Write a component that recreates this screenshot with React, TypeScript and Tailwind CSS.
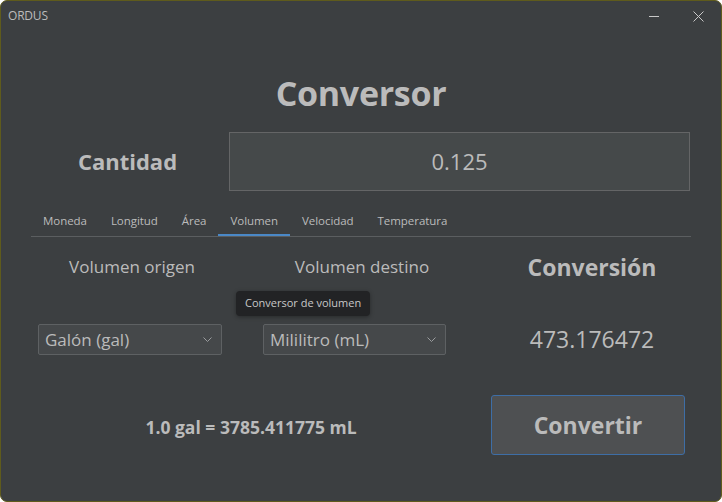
import React from 'react';

const tabs = ['Moneda', 'Longitud', 'Área', 'Volumen', 'Velocidad', 'Temperatura'];

const Chevron = () => (
  <svg width="9" height="5" viewBox="0 0 9 5" fill="none" stroke="#9a9c9e" strokeWidth="1">
    <path d="M0.5 0.5 L4.5 4.5 L8.5 0.5" />
  </svg>
);

const Combo = ({ label, width }: { label: string; width: string }) => (
  <div className={`${width} h-[31px] flex items-center justify-between pl-[6px] pr-[9px] bg-[#45484a] border border-[#5e6163] rounded-[2px]`}>
    <span className="text-[17px] text-[#bbbbbb]">{label}</span>
    <Chevron />
  </div>
);

export default function App() {
  return (
    <div
      className="w-[722px] h-[502px] bg-[#3c3f41] border border-[#5f5b1c] rounded-[7px] overflow-hidden text-[#bbbbbb] flex flex-col"
      style={{ fontFamily: '"Open Sans", "Noto Sans", sans-serif' }}
    >
      {/* title bar */}
      <div className="h-[30px] flex items-center justify-between pl-[7px] pr-[17px]">
        <span className="text-[12px] tracking-[-0.2px]">ORDUS</span>
        <div className="flex items-center gap-[33px]">
          <svg width="11" height="11" viewBox="0 0 11 11" stroke="#c8c8c8" strokeWidth="1">
            <path d="M0 5.5 H10" />
          </svg>
          <svg width="11" height="11" viewBox="0 0 11 11" stroke="#c8c8c8" strokeWidth="1">
            <path d="M0.5 0.5 L10.5 10.5 M10.5 0.5 L0.5 10.5" />
          </svg>
        </div>
      </div>

      <h1 className="mt-[42px] text-center text-[34px] font-bold leading-[40px] tracking-[-0.3px]">Conversor</h1>

      {/* cantidad */}
      <div className="mt-[19px] flex items-center pl-[31px] pr-[31px]">
        <div className="w-[197px] pr-[6px] text-center text-[22px] font-bold">Cantidad</div>
        <div className="flex-1 h-[59px] bg-[#45494a] border border-[#646566] flex items-center justify-center text-[22px]">
          0.125
        </div>
      </div>

      {/* tabs */}
      <div className="mt-[17px] mx-[30px] flex border-b border-[#5b5e60] text-[11.5px] tracking-[-0.05px]">
        {tabs.map((t) => (
          <div
            key={t}
            className={`px-[12px] h-[28px] flex items-center border-b-2 ${
              t === 'Volumen' ? 'border-[#4a88c7]' : 'border-transparent'
            }`}
          >
            {t}
          </div>
        ))}
      </div>

      {/* labels + combos */}
      <div className="relative mt-[15px] pl-[16px] grid grid-cols-[230px_230px_230px]">
        <div className="text-center text-[17px] leading-[30px]">Volumen origen</div>
        <div className="text-center text-[17px] leading-[30px]">Volumen destino</div>
        <div className="text-center text-[23px] font-bold leading-[30px]">Conversión</div>

        <div className="mt-[42px] pl-[21px]">
          <Combo label="Galón (gal)" width="w-[184px]" />
        </div>
        <div className="mt-[42px] pl-[16px]">
          <Combo label="Mililitro (mL)" width="w-[183px]" />
        </div>
        <div className="mt-[42px] text-center text-[23px] leading-[31px]">473.176472</div>

        <div className="absolute left-[235px] top-[39px] h-[25px] px-[9px] flex items-center bg-[#222325] rounded-[4px] text-[11px] text-[#c8c8c8] shadow-[0_1px_4px_rgba(0,0,0,0.35)]">
          Conversor de volumen
        </div>
      </div>

      {/* bottom */}
      <div className="mt-[40px] pl-[16px] grid grid-cols-[460px_230px] items-center">
        <div className="text-center text-[17.5px] font-bold pl-[8px] pt-[4px]">1.0 gal = 3785.411775 mL</div>
        <div className="flex justify-center pr-[8px]">
          <button className="w-[194px] h-[60px] bg-[#4e5052] border border-[#3e6ea6] rounded-[3px] text-[23px] font-bold text-[#bbbbbb]">
            Convertir
          </button>
        </div>
      </div>
    </div>
  );
}
